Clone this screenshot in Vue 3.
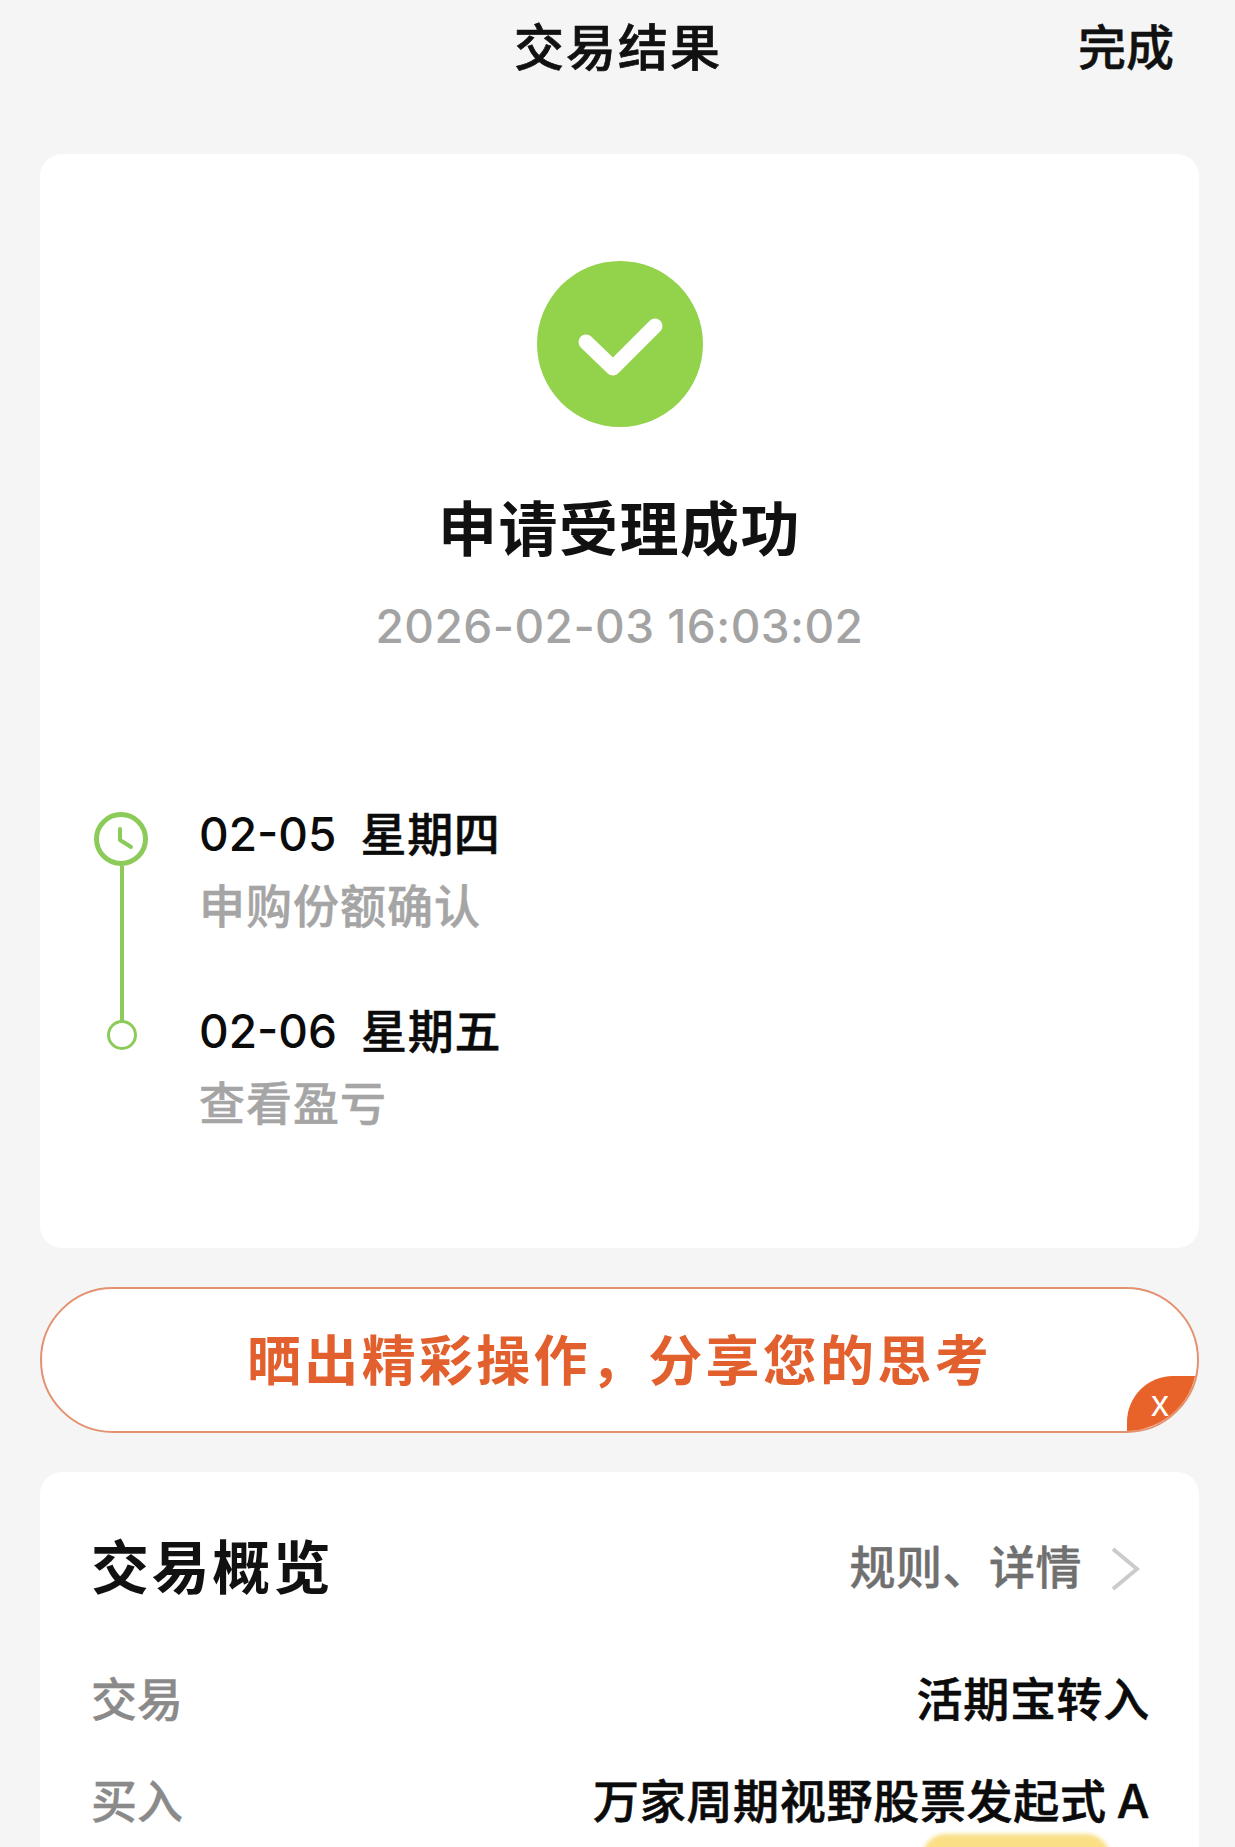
<script setup>
const steps = [
  { date: '02-05', day: '星期四', desc: '申购份额确认' },
  { date: '02-06', day: '星期五', desc: '查看盈亏' },
]

const rows = [
  { label: '交易', value: '活期宝转入' },
  { label: '买入', value: '万家周期视野股票发起式 A' },
]
</script>

<template>
  <div class="page">
    <header class="nav">
      <span></span>
      <h1 class="nav-title">交易结果</h1>
      <span class="nav-done">完成</span>
    </header>

    <section class="card result">
      <svg class="check" width="166" height="166" viewBox="0 0 166 166">
        <circle cx="83" cy="83" r="83" fill="#93d24b" />
        <path d="M49 81 L76 107 L118 65" fill="none" stroke="#fff" stroke-width="15" stroke-linecap="round" stroke-linejoin="round" />
      </svg>
      <h2 class="result-title">申请受理成功</h2>
      <div class="result-time">2026-02-03 16:03:02</div>

      <div class="timeline">
        <div class="rail">
          <svg width="54" height="54" viewBox="0 0 54 54">
            <circle cx="27" cy="27" r="24.5" fill="#fff" stroke="#8ccb5a" stroke-width="5" />
            <path d="M26 17 L26 28 L37 35" fill="none" stroke="#8ccb5a" stroke-width="4" stroke-linecap="round" stroke-linejoin="round" />
          </svg>
          <div class="rail-line"></div>
          <div class="rail-dot"></div>
        </div>
        <div class="steps">
          <div class="step" v-for="step in steps" :key="step.date">
            <div class="step-date"><span>{{ step.date }}</span><span class="step-day">{{ step.day }}</span></div>
            <div class="step-desc">{{ step.desc }}</div>
          </div>
        </div>
      </div>
    </section>

    <div class="share">
      <span class="share-text">晒出精彩操作，分享您的思考</span>
      <div class="share-close">x</div>
    </div>

    <section class="card overview">
      <div class="overview-head">
        <h3 class="overview-title">交易概览</h3>
        <div class="overview-link">
          <span>规则、详情</span>
          <svg width="30" height="46" viewBox="0 0 30 46">
            <path d="M3 3 L27 23 L3 43" fill="none" stroke="#cbcbcb" stroke-width="4" />
          </svg>
        </div>
      </div>
      <div class="row" v-for="row in rows" :key="row.label">
        <span class="row-label">{{ row.label }}</span>
        <span class="row-value">{{ row.value }}</span>
      </div>
      <div class="tag"></div>
    </section>
  </div>
</template>

<style>
html, body {
  margin: 0;
  background: #f5f5f5;
}
</style>

<style scoped>
.page {
  width: 1235px;
  height: 1847px;
  overflow: hidden;
  box-sizing: border-box;
  padding: 0 36px 0 40px;
  background: #f5f5f5;
  font-family: Inter, "Noto Sans CJK SC", sans-serif;
  font-weight: 500;
  color: #111;
}

.nav {
  display: grid;
  grid-template-columns: 1fr auto 1fr;
  align-items: center;
  height: 87px;
  margin-bottom: 67px;
  padding-right: 25px;
}

.nav-title {
  margin: 0 0 0 22px;
  font-size: 50px;
  font-weight: 500;
  letter-spacing: 2px;
  -webkit-text-stroke: 0.7px #111;
}

.nav-done {
  justify-self: end;
  font-size: 48px;
  -webkit-text-stroke: 0.5px #111;
}

.card {
  background: #fff;
  border-radius: 22px;
}

.result {
  display: flex;
  flex-direction: column;
  align-items: center;
  padding: 107px 54px 117px;
}

.check {
  display: block;
}

.result-title {
  margin: 68px 0 0;
  font-size: 59px;
  line-height: 70px;
  font-weight: 700;
  letter-spacing: 1.5px;
}

.result-time {
  margin-top: 33px;
  font-size: 46px;
  line-height: 56px;
  letter-spacing: 0.45px;
  color: #a3a3a3;
}

.timeline {
  display: flex;
  align-self: stretch;
  gap: 51px;
  margin-top: 158px;
}

.rail {
  display: flex;
  flex-direction: column;
  align-items: center;
  width: 54px;
}

.rail svg {
  display: block;
}

.rail-line {
  width: 4px;
  height: 155px;
  margin-left: 1px;
  background: #8ccb5a;
}

.rail-dot {
  box-sizing: border-box;
  width: 30px;
  height: 30px;
  margin-top: -1px;
  margin-left: 2px;
  border: 3px solid #8ccb5a;
  border-radius: 50%;
  background: #fff;
}

.steps {
  display: flex;
  flex-direction: column;
  gap: 75px;
}

.step {
  height: 122px;
}

.step-date {
  display: flex;
  gap: 24px;
  margin-top: -2px;
  font-size: 46px;
  line-height: 48px;
  color: #0b0b0b;
}

.step-day {
  letter-spacing: 0.7px;
  -webkit-text-stroke: 0.5px #0b0b0b;
}

.step-desc {
  margin-top: 24px;
  font-size: 46px;
  line-height: 48px;
  letter-spacing: 1px;
  color: #a5a5a5;
  -webkit-text-stroke: 0.5px #a5a5a5;
}

.share {
  position: relative;
  display: flex;
  align-items: center;
  justify-content: center;
  box-sizing: border-box;
  height: 146px;
  margin: 39px 0 39px;
  padding-bottom: 6px;
  overflow: hidden;
  border: 2px solid #e39270;
  border-radius: 73px;
  background: #fff;
}

.share-text {
  font-size: 54px;
  font-weight: 700;
  letter-spacing: 3.3px;
  color: #e2602e;
}

.share-close {
  position: absolute;
  right: 0;
  bottom: 0;
  box-sizing: border-box;
  width: 70px;
  height: 55px;
  padding-right: 4px;
  border-radius: 46px 0 0 0;
  background: #e8632a;
  color: #fff;
  font-size: 36px;
  line-height: 56px;
  text-align: center;
  font-family: "Liberation Sans", sans-serif;
  font-weight: 400;
}

.overview {
  display: flex;
  flex-direction: column;
  height: 400px;
  padding: 62px 49px 0 51px;
}

.overview-head {
  display: flex;
  align-items: center;
  justify-content: space-between;
  height: 60px;
  margin-bottom: 72px;
}

.overview-title {
  margin: 0;
  font-size: 58px;
  font-weight: 700;
  letter-spacing: 2.6px;
}

.overview-link {
  display: flex;
  align-items: center;
  gap: 28px;
  margin-right: 10px;
  font-size: 46px;
  letter-spacing: 0.5px;
  color: #707070;
  -webkit-text-stroke: 0.4px #707070;
}

.overview-link svg {
  transform: translateY(5px);
}

.row {
  display: flex;
  align-items: center;
  justify-content: space-between;
  height: 60px;
  margin-bottom: 42px;
  font-size: 46px;
}

.row-label {
  color: #8a8a8a;
  -webkit-text-stroke: 0.4px #8a8a8a;
}

.row-value {
  letter-spacing: 0.7px;
  word-spacing: -3px;
  color: #0b0b0b;
  -webkit-text-stroke: 0.6px #0b0b0b;
}

.tag {
  align-self: flex-end;
  width: 188px;
  height: 40px;
  margin-top: -36px;
  margin-right: 40px;
  border-radius: 24px 24px 0 0;
  background: #fadf85;
  filter: blur(2px);
}
</style>
